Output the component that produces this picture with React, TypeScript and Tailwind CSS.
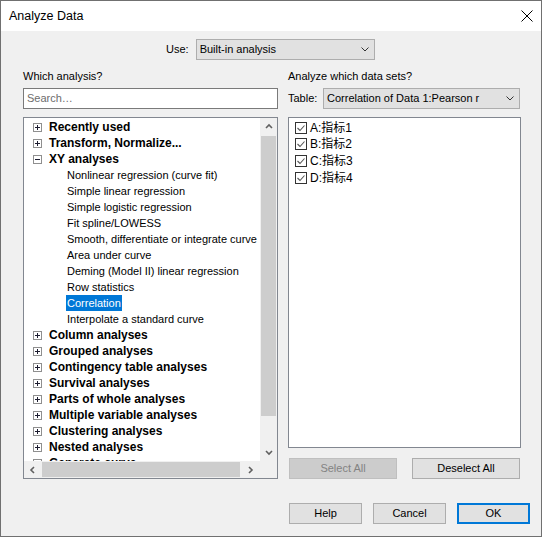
import React from 'react';

const topGroups = ['Recently used', 'Transform, Normalize...'];
const xyItems = [
  'Nonlinear regression (curve fit)',
  'Simple linear regression',
  'Simple logistic regression',
  'Fit spline/LOWESS',
  'Smooth, differentiate or integrate curve',
  'Area under curve',
  'Deming (Model II) linear regression',
  'Row statistics',
  'Correlation',
  'Interpolate a standard curve',
];
const bottomGroups = [
  'Column analyses',
  'Grouped analyses',
  'Contingency table analyses',
  'Survival analyses',
  'Parts of whole analyses',
  'Multiple variable analyses',
  'Clustering analyses',
  'Nested analyses',
  'Generate curve',
];
const dataSets = ['A:指标1', 'B:指标2', 'C:指标3', 'D:指标4'];

function ExpandBox({ open }: { open?: boolean }) {
  return (
    <svg width="9" height="9" viewBox="0 0 9 9" className="shrink-0">
      <rect x="0.5" y="0.5" width="8" height="8" fill="#fff" stroke="#8f8f8f" />
      <line x1="2" y1="4.5" x2="7" y2="4.5" stroke="#1c1c30" />
      {!open && <line x1="4.5" y1="2" x2="4.5" y2="7" stroke="#1c1c30" />}
    </svg>
  );
}

function Chevron({ dir }: { dir: 'up' | 'down' | 'left' | 'right' }) {
  const pts = {
    up: '1,5 4,2 7,5',
    down: '1,2 4,5 7,2',
    left: '5,1 2,4 5,7',
    right: '2,1 5,4 2,7',
  }[dir];
  const horiz = dir === 'up' || dir === 'down';
  return (
    <svg width={horiz ? 8 : 7} height={horiz ? 7 : 8} viewBox={horiz ? '0 0 8 7' : '0 0 7 8'}>
      <polyline points={pts} fill="none" stroke="#606060" strokeWidth="1.6" />
    </svg>
  );
}

function SelectBox({ text, className }: { text: string; className: string }) {
  return (
    <div className={`h-[21px] bg-[#e1e1e1] border border-[#adadad] flex items-center pl-[3px] pr-[5px] justify-between ${className}`}>
      <span>{text}</span>
      <svg width="8" height="5" viewBox="0 0 8 5">
        <polyline points="0.5,0.5 4,4 7.5,0.5" fill="none" stroke="#333" strokeWidth="1" />
      </svg>
    </div>
  );
}

function Btn({ label, className = '' }: { label: string; className?: string }) {
  return (
    <div className={`h-[21px] flex items-center justify-center bg-[#e1e1e1] border border-[#adadad] ${className}`}>
      {label}
    </div>
  );
}

export default function App() {
  return (
    <div className="w-[542px] h-[537px] border border-[#707070] bg-[#f0f0f0] flex flex-col text-[11px] text-black font-['Liberation_Sans','Noto_Sans_CJK_SC',sans-serif]">
      {/* title bar */}
      <div className="h-[30px] bg-white flex items-center justify-between pl-[8px] pr-[8px]">
        <span className="text-[12.5px]">Analyze Data</span>
        <svg width="12" height="12" viewBox="0 0 12 12">
          <path d="M0.5 0.5 L11.5 11.5 M11.5 0.5 L0.5 11.5" stroke="#000" strokeWidth="1" />
        </svg>
      </div>

      {/* use row */}
      <div className="mt-[8px] flex items-center pl-[165px] gap-[7px]">
        <span>Use:</span>
        <SelectBox text="Built-in analysis" className="w-[179px]" />
      </div>

      <div className="mt-[9px] flex pl-[22px] gap-[10px]">
        {/* left column */}
        <div className="w-[255px] flex flex-col">
          <div className="h-[14px] leading-[14px]">Which analysis?</div>
          <div className="mt-[5px] h-[21px] bg-white border border-[#7a7a7a] flex items-center pl-[3px] text-[#6d6d6d]">
            Search…
          </div>
          <div className="mt-[8px] h-[362px] border border-[#828790] bg-white flex flex-col">
            <div className="flex h-[343px]">
              <div className="w-[236px] overflow-hidden pt-px whitespace-nowrap">
                {topGroups.map((g) => (
                  <div key={g} className="h-[16px] flex items-center pl-[9px] gap-[7px]">
                    <ExpandBox />
                    <span className="text-[12px] font-bold">{g}</span>
                  </div>
                ))}
                <div className="h-[16px] flex items-center pl-[9px] gap-[7px]">
                  <ExpandBox open />
                  <span className="text-[12px] font-bold">XY analyses</span>
                </div>
                {xyItems.map((it) => (
                  <div key={it} className="h-[16px] flex items-center pl-[42px]">
                    <span className={`px-[1px] leading-[16px] ${it === 'Correlation' ? 'bg-[#0078d7] text-white' : ''}`}>{it}</span>
                  </div>
                ))}
                {bottomGroups.map((g) => (
                  <div key={g} className="h-[16px] flex items-center pl-[9px] gap-[7px]">
                    <ExpandBox />
                    <span className="text-[12px] font-bold">{g}</span>
                  </div>
                ))}
              </div>
              <div className="w-[17px] bg-[#f0f0f0] flex flex-col">
                <div className="h-[17px] flex items-center justify-center"><Chevron dir="up" /></div>
                <div className="flex-1">
                  <div className="mt-px mx-[1px] h-[280px] bg-[#cdcdcd]" />
                </div>
                <div className="h-[17px] flex items-center justify-center"><Chevron dir="down" /></div>
              </div>
            </div>
            <div className="flex h-[17px] bg-[#f0f0f0]">
              <div className="w-[236px] flex items-center">
                <div className="w-[17px] h-[17px] flex items-center justify-center"><Chevron dir="left" /></div>
                <div className="ml-px h-[15px] w-[198px] bg-[#cdcdcd]" />
                <div className="flex-1 h-[17px] flex items-center justify-center"><Chevron dir="right" /></div>
              </div>
              <div className="w-[17px]" />
            </div>
          </div>
        </div>

        {/* right column */}
        <div className="w-[233px] flex flex-col">
          <div className="h-[14px] leading-[14px]">Analyze which data sets?</div>
          <div className="mt-[5px] flex items-center">
            <span>Table:</span>
            <SelectBox text="Correlation of Data 1:Pearson r" className="ml-auto mr-px w-[197px]" />
          </div>
          <div className="mt-[8px] h-[331px] border border-[#828790] bg-white pt-[1.5px]">
            {dataSets.map((d) => (
              <div key={d} className="h-[16.6px] flex items-center pl-[6px] gap-[3px]">
                <svg width="12" height="12" viewBox="0 0 12 12" className="shrink-0">
                  <rect x="0.5" y="0.5" width="11" height="11" fill="#fff" stroke="#333" />
                  <polyline points="2.5,6 5,8.5 9.5,3.5" fill="none" stroke="#555" strokeWidth="1.1" />
                </svg>
                <span className="text-[12px]">{d}</span>
              </div>
            ))}
          </div>
          <div className="mt-[10px] flex gap-[15px] ml-px">
            <div className="w-[108px] h-[21px] flex items-center justify-center bg-[#cccccc] border border-[#bfbfbf] text-[#838383]">
              Select All
            </div>
            <Btn label="Deselect All" className="w-[108px]" />
          </div>
        </div>
      </div>

      {/* bottom buttons */}
      <div className="mt-[24px] flex justify-end pr-[11px] gap-[11px]">
        <Btn label="Help" className="w-[73px]" />
        <Btn label="Cancel" className="w-[73px]" />
        <div className="w-[73px] h-[21px] flex items-center justify-center bg-[#e1e1e1] border-2 border-[#0078d7]">
          OK
        </div>
      </div>
    </div>
  );
}
